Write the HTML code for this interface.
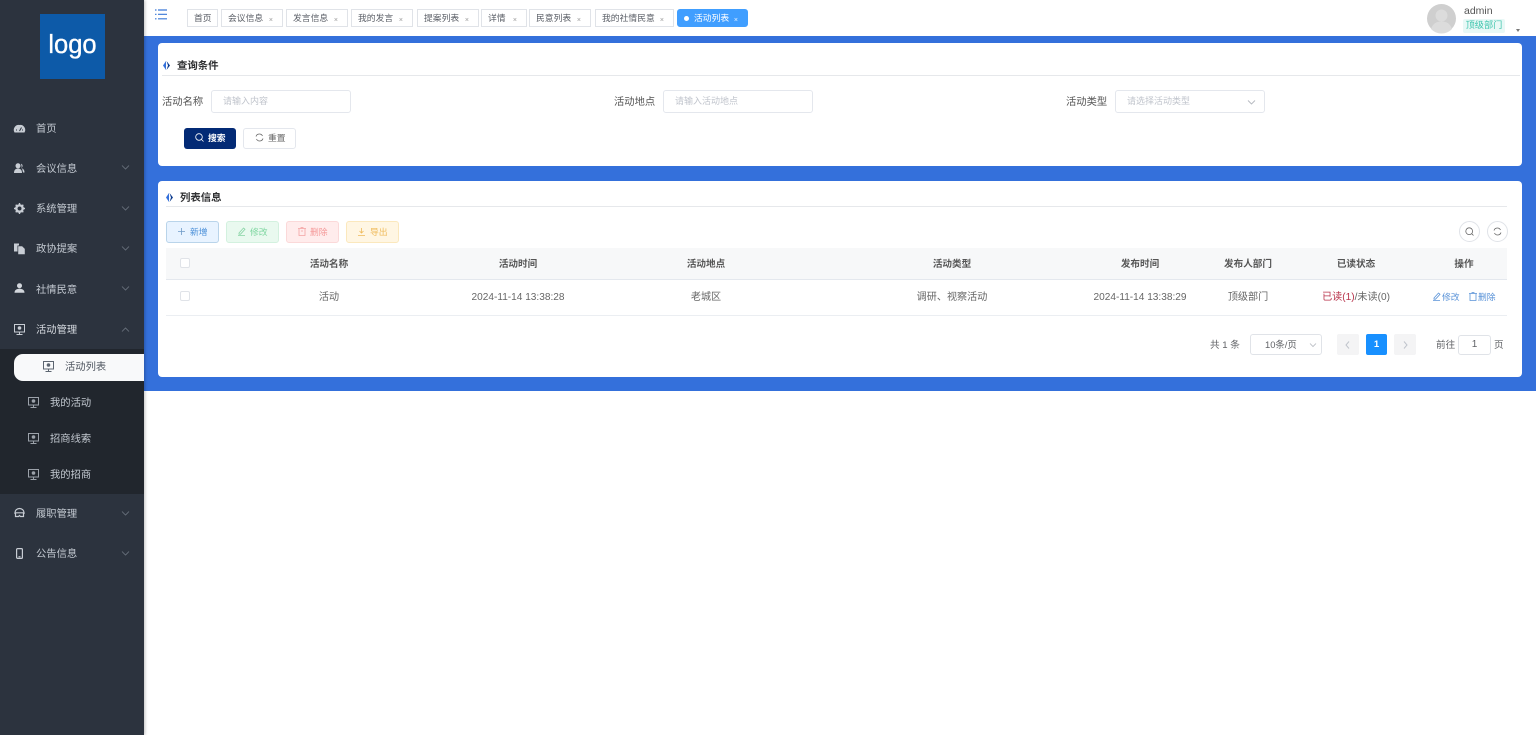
<!DOCTYPE html>
<html lang="zh-CN"><head><meta charset="utf-8"><title>活动列表</title>
<style>
*{box-sizing:border-box}
html,body{margin:0;padding:0;width:1536px;height:735px;overflow:hidden;background:#fff;font-family:"Liberation Sans","Noto Sans CJK SC",sans-serif;color:#606266}
#wrap{position:absolute;left:0;top:0;width:1536px;height:735px;overflow:hidden;filter:blur(.3px)}
.a{position:absolute;white-space:nowrap}
.c{text-align:center;transform:translateX(-50%)}
#side{left:0;top:0;width:144px;height:735px;background:#2c333e;box-shadow:1px 0 3px rgba(0,0,0,.25)}
.m{position:absolute;left:36px;font-size:10.3px;line-height:14px;color:#c3c9d1;white-space:nowrap}
.s{position:absolute;left:50px;font-size:10.3px;line-height:14px;color:#c3c9d1;white-space:nowrap}
svg{position:absolute;overflow:visible}
.tab{position:absolute;top:9px;height:18px;border:1px solid #e0e3e8;background:#fff;font-size:8.8px;line-height:17px;padding-left:6px;color:#5a5e66;white-space:nowrap}
.tab i{position:absolute;right:9px;top:2px;font-style:normal;font-size:7px;color:#999}
.card{position:absolute;background:#fff;border-radius:4px;left:158px;width:1364px}
.ttl{position:absolute;font-size:10.4px;font-weight:700;color:#303133;line-height:14px;white-space:nowrap}
.lab{position:absolute;top:96px;font-size:10.3px;line-height:14px;color:#555;white-space:nowrap}
.inp{position:absolute;top:90px;height:23px;border:1px solid #e4e7ed;border-radius:3px;background:#fff;font-size:9px;line-height:21px;color:#c0c4cc;padding-left:11px;white-space:nowrap}
.btn{position:absolute;top:221px;width:53px;height:22px;border-radius:3px;font-size:8.8px;line-height:20px;white-space:nowrap}
.btn b{position:absolute;left:23px;top:0;font-weight:400}
.th{font-size:9.6px;font-weight:700;color:#555;line-height:13px}
.td{font-size:10.1px;color:#666;line-height:14px}
.cb{position:absolute;left:180px;width:10px;height:10px;border:1px solid #e0e3e8;border-radius:2px;background:#fff}
</style></head><body><div id="wrap">

<div class="a" style="left:144px;top:36px;width:1392px;height:355px;background:#3470db"></div>

<div id="side" class="a">
<div class="a" style="left:40px;top:14px;width:65px;height:65px;background:#0d5aa8;color:#fff;font-size:25.5px;line-height:63px;text-align:center;-webkit-text-stroke:.35px #fff">logo</div>
<div class="a" style="left:0;top:349px;width:144px;height:145px;background:#21262d"></div>

<div class="m" style="top:123px">首页</div>
<div class="m" style="top:163px">会议信息</div>
<div class="m" style="top:203px">系统管理</div>
<div class="m" style="top:243px">政协提案</div>
<div class="m" style="top:284px">社情民意</div>
<div class="m" style="top:324px;color:#d5d9df">活动管理</div>
<div class="m" style="top:508px">履职管理</div>
<div class="m" style="top:548px">公告信息</div>

<svg style="left:14px;top:124px" width="11" height="9" viewBox="0 0 11 9"><path d="M.5 8.500A5 5 0 0 1 5.500 1a5 5 0 0 1 5 7.500z" fill="#c8cdd4"/><path d="M5.500 7L7.500 3.500M2 6h1M8 6h1" stroke="#2c333e" stroke-width="1"/></svg>
<svg style="left:14px;top:163px" width="11" height="10" viewBox="0 0 11 10"><circle cx="4" cy="2.800" r="2.500" fill="#c8cdd4"/><path d="M0 10C0 6.500 2 5.500 4 5.500S8 6.500 8 10z" fill="#c8cdd4"/><path d="M7 .8a2.200 2.200 0 0 1 0 4.200c2 .5 3.500 1.500 3.500 4.500H9" fill="#c8cdd4"/></svg>
<svg style="left:14px;top:203px" width="11" height="11" viewBox="0 0 11 11"><circle cx="5.500" cy="5.500" r="3.200" fill="none" stroke="#c8cdd4" stroke-width="2.400"/><path d="M5.500 0v1.500M5.500 9.500V11M0 5.500h1.500M9.500 5.500H11M1.700 1.700l1 1M8.300 8.300l1 1M1.700 9.300l1-1M8.300 2.700l1-1" stroke="#c8cdd4" stroke-width="1.400"/></svg>
<svg style="left:14px;top:243px" width="11" height="11" viewBox="0 0 11 11"><path d="M0 .5h5v2H3.500v6H0z" fill="#c8cdd4"/><path d="M4.500 3.500h3.500l2.500 2.500v5h-6z" fill="#c8cdd4" stroke="#c8cdd4" stroke-width=".6"/></svg>
<svg style="left:14px;top:283px" width="11" height="10" viewBox="0 0 11 10"><circle cx="5.500" cy="2.700" r="2.500" fill="#d2d6dc"/><path d="M.5 9.800C.5 6.800 3 5.800 5.500 5.800S10.500 6.800 10.500 9.800z" fill="#d2d6dc"/></svg>
<svg style="left:14px;top:324px" width="11" height="11" viewBox="0 0 11 11" fill="none" stroke="#c8cdd4"><rect x=".5" y=".5" width="10" height="7.500"/><path d="M5.500 8v2.500M2.500 10.500h6"/><circle cx="5.500" cy="4" r="1.300" fill="#c8cdd4"/></svg>
<svg style="left:14px;top:508px" width="11" height="10" viewBox="0 0 11 10" fill="none" stroke="#c8cdd4" stroke-width="1.200"><path d="M1 6V4.500A4.500 4 0 0 1 10 4.500V6"/><path d="M.5 4.800h10M1.500 5v3.500h3l1-1 1 1h3V5"/></svg>
<svg style="left:16px;top:548px" width="7" height="11" viewBox="0 0 7 11" fill="none" stroke="#c8cdd4" stroke-width="1.200"><rect x=".6" y=".6" width="5.800" height="9.800" rx="1"/><path d="M2.500 8.800h2"/></svg>

<svg style="left:121px;top:165px" width="9" height="5" viewBox="0 0 9 5" fill="none" stroke="#6d7580" stroke-width=".8"><path d="M1 .5l3.500 3.500L8 .5"/></svg>
<svg style="left:121px;top:206px" width="9" height="5" viewBox="0 0 9 5" fill="none" stroke="#6d7580" stroke-width=".8"><path d="M1 .5l3.500 3.500L8 .5"/></svg>
<svg style="left:121px;top:246px" width="9" height="5" viewBox="0 0 9 5" fill="none" stroke="#6d7580" stroke-width=".8"><path d="M1 .5l3.500 3.500L8 .5"/></svg>
<svg style="left:121px;top:286px" width="9" height="5" viewBox="0 0 9 5" fill="none" stroke="#6d7580" stroke-width=".8"><path d="M1 .5l3.500 3.500L8 .5"/></svg>
<svg style="left:121px;top:327px" width="9" height="5" viewBox="0 0 9 5" fill="none" stroke="#6d7580" stroke-width=".8"><path d="M1 4.500L4.500 1 8 4.500"/></svg>
<svg style="left:121px;top:511px" width="9" height="5" viewBox="0 0 9 5" fill="none" stroke="#6d7580" stroke-width=".8"><path d="M1 .5l3.500 3.500L8 .5"/></svg>
<svg style="left:121px;top:551px" width="9" height="5" viewBox="0 0 9 5" fill="none" stroke="#6d7580" stroke-width=".8"><path d="M1 .5l3.500 3.500L8 .5"/></svg>

<div class="a" style="left:14px;top:354px;width:130px;height:27px;background:#f8f9fa;border-radius:9px 0 0 9px"></div>
<div class="s" style="left:65px;top:361px;color:#4f5660">活动列表</div>
<svg style="left:43px;top:361px" width="11" height="11" viewBox="0 0 11 11" fill="none" stroke="#5c6570"><rect x=".5" y=".5" width="10" height="7.500"/><path d="M5.500 8v2.500M2.500 10.500h6"/><circle cx="5.500" cy="4" r="1.300" fill="#5c6570"/></svg>
<div class="s" style="top:397px">我的活动</div>
<div class="s" style="top:433px">招商线索</div>
<div class="s" style="top:469px">我的招商</div>
<svg style="left:28px;top:397px" width="11" height="11" viewBox="0 0 11 11" fill="none" stroke="#9ca2aa"><rect x=".5" y=".5" width="10" height="7.500"/><path d="M5.500 8v2.500M2.500 10.500h6"/><circle cx="5.500" cy="4" r="1.300" fill="#9ca2aa"/></svg>
<svg style="left:28px;top:433px" width="11" height="11" viewBox="0 0 11 11" fill="none" stroke="#9ca2aa"><rect x=".5" y=".5" width="10" height="7.500"/><path d="M5.500 8v2.500M2.500 10.500h6"/><circle cx="5.500" cy="4" r="1.300" fill="#9ca2aa"/></svg>
<svg style="left:28px;top:469px" width="11" height="11" viewBox="0 0 11 11" fill="none" stroke="#9ca2aa"><rect x=".5" y=".5" width="10" height="7.500"/><path d="M5.500 8v2.500M2.500 10.500h6"/><circle cx="5.500" cy="4" r="1.300" fill="#9ca2aa"/></svg>
</div>

<svg style="left:155px;top:9px" width="12" height="11" viewBox="0 0 12 11" fill="none" stroke="#3a78d6" stroke-width="1.200"><path d="M3 1h9M3 5.300h9M3 9.800h9M0 1h1.500M0 5.300h1.500M0 9.800h1.500"/></svg>

<div class="tab" style="left:187px;width:31px">首页</div>
<div class="tab" style="left:221px;width:62px">会议信息<i>×</i></div>
<div class="tab" style="left:286px;width:62px">发言信息<i>×</i></div>
<div class="tab" style="left:351px;width:62px">我的发言<i>×</i></div>
<div class="tab" style="left:417px;width:62px">提案列表<i>×</i></div>
<div class="tab" style="left:481px;width:46px">详情<i>×</i></div>
<div class="tab" style="left:529px;width:62px">民意列表<i>×</i></div>
<div class="tab" style="left:595px;width:79px">我的社情民意<i>×</i></div>
<div class="tab" style="left:677px;width:71px;background:#409eff;border-color:#409eff;color:#fff;border-radius:3px;padding-left:16px">活动列表<i style="color:#e8f3ff">×</i></div>
<div class="a" style="left:684px;top:16px;width:5px;height:5px;border-radius:50%;background:#fff"></div>

<svg style="left:1427px;top:4px" width="29" height="29" viewBox="0 0 29 29"><circle cx="14.500" cy="14.500" r="14.500" fill="#cfcfcf"/><circle cx="14.500" cy="11.500" r="6" fill="#dcdcdc"/><path d="M4 25c2-6 6-7.500 10.500-7.500S23 19 25 25a14.500 14.500 0 0 1-21 0z" fill="#dcdcdc"/></svg>
<div class="a" style="left:1464px;top:4px;font-size:10.5px;line-height:14px;color:#555">admin</div>
<div class="a" style="left:1463px;top:19px;width:42px;height:14px;background:#e8f8f6;border-radius:2px;font-size:9.2px;line-height:13px;text-align:center;color:#3fc5ad">顶级部门</div>
<div class="a" style="left:1516px;top:29px;width:0;height:0;border:2.500px solid transparent;border-top:3px solid #777"></div>

<div class="card" style="top:43px;height:123px"></div>
<svg style="left:163px;top:61px" width="7" height="9" viewBox="0 0 7 9"><path d="M3 0L0 4.500 3 9z" fill="#3470db"/><path d="M3.500 0L7 4.500 3.500 9 5 4.500z" fill="#0c3b8e"/></svg>
<div class="ttl" style="left:177px;top:60px">查询条件</div>
<div class="a" style="left:162px;top:75px;width:1358px;height:1px;background:#e6e8eb"></div>

<div class="lab" style="left:162px">活动名称</div>
<div class="inp" style="left:211px;width:140px">请输入内容</div>
<div class="lab" style="left:614px">活动地点</div>
<div class="inp" style="left:663px;width:150px">请输入活动地点</div>
<div class="lab" style="left:1066px">活动类型</div>
<div class="inp" style="left:1115px;width:150px">请选择活动类型</div>
<svg style="left:1247px;top:100px" width="9" height="5" viewBox="0 0 9 5" fill="none" stroke="#b4b8bf" stroke-width=".9"><path d="M1 .5l3.500 3.500L8 .5"/></svg>

<div class="a" style="left:184px;top:128px;width:52px;height:21px;background:#032a75;border-radius:3px;color:#fff;font-size:8.8px;line-height:20px;padding-left:24px;font-weight:700">搜索</div>
<svg style="left:195px;top:133px" width="9" height="9" viewBox="0 0 9 9" fill="none" stroke="#fff" stroke-width=".8"><circle cx="4" cy="4" r="3.300"/><path d="M6.500 6.500L8.500 8.500"/></svg>
<div class="a" style="left:243px;top:128px;width:53px;height:21px;background:#fff;border:1px solid #e4e7ed;border-radius:3px;color:#666;font-size:8.8px;line-height:19px;padding-left:24px">重置</div>
<svg style="left:255px;top:133px" width="9" height="9" viewBox="0 0 9 9" fill="none" stroke="#666" stroke-width=".8"><path d="M1 3.500A3.500 3.500 0 0 1 7.500 3M8 5.500A3.500 3.500 0 0 1 1.500 6"/></svg>

<div class="card" style="top:181px;height:196px"></div>
<svg style="left:166px;top:193px" width="7" height="9" viewBox="0 0 7 9"><path d="M3 0L0 4.500 3 9z" fill="#3470db"/><path d="M3.500 0L7 4.500 3.500 9 5 4.500z" fill="#0c3b8e"/></svg>
<div class="ttl" style="left:180px;top:192px">列表信息</div>
<div class="a" style="left:166px;top:206px;width:1341px;height:1px;background:#e6e8eb"></div>

<div class="btn" style="left:166px;background:#e8f3ff;border:1px solid #b9d4ea;color:#4a8fd8"><b>新增</b></div>
<svg style="left:178px;top:228px" width="7" height="7" viewBox="0 0 7 7" stroke="#6f9bc8" stroke-width=".8"><path d="M3.500 0v7M0 3.500h7"/></svg>
<div class="btn" style="left:226px;background:#e9f9ef;border:1px solid #d3f1df;color:#7ed6a0"><b>修改</b></div>
<svg style="left:238px;top:227px" width="8" height="9" viewBox="0 0 8 9" fill="none" stroke="#86d3a4" stroke-width=".8"><path d="M1 6L5.500 1l1.500 1.300L2.500 7.200H1zM0 8.500h7"/></svg>
<div class="btn" style="left:286px;background:#ffecec;border:1px solid #fbd9d9;color:#f59a9a"><b>删除</b></div>
<svg style="left:298px;top:227px" width="8" height="9" viewBox="0 0 8 9" fill="none" stroke="#f4a3a3" stroke-width=".8"><path d="M0 1.500h8M3 1.500V.5h2v1M1 1.500v7h6v-7M3 4h2"/></svg>
<div class="btn" style="left:346px;background:#fff6e3;border:1px solid #fbe8bd;color:#efbb5b"><b>导出</b></div>
<svg style="left:358px;top:228px" width="7" height="8" viewBox="0 0 7 8" fill="none" stroke="#eeb95a" stroke-width=".8"><path d="M3.500 0v4.500M1.500 3l2 2 2-2M0 7.500h7"/></svg>

<div class="a" style="left:1459px;top:221px;width:21px;height:21px;border:1px solid #e0e3e8;border-radius:50%"></div>
<svg style="left:1465px;top:227px" width="9" height="9" viewBox="0 0 9 9" fill="none" stroke="#666" stroke-width=".8"><circle cx="4.200" cy="4.200" r="3.400"/><path d="M6.700 6.700L8.500 8.500"/></svg>
<div class="a" style="left:1487px;top:221px;width:21px;height:21px;border:1px solid #e0e3e8;border-radius:50%"></div>
<svg style="left:1493px;top:227px" width="9" height="9" viewBox="0 0 9 9" fill="none" stroke="#666" stroke-width=".8"><path d="M1 3.500A3.500 3.500 0 0 1 7.500 3M8 5.500A3.500 3.500 0 0 1 1.500 6"/></svg>

<div class="a" style="left:166px;top:248px;width:1341px;height:31px;background:#f7f8f9"></div>
<div class="a" style="left:166px;top:279px;width:1341px;height:1px;background:#e4e8ee"></div>
<div class="a" style="left:166px;top:315px;width:1341px;height:1px;background:#ebeef2"></div>
<div class="cb" style="top:258px"></div>
<div class="cb" style="top:291px"></div>

<div class="a c th" style="left:329px;top:258px">活动名称</div>
<div class="a c th" style="left:518px;top:258px">活动时间</div>
<div class="a c th" style="left:706px;top:258px">活动地点</div>
<div class="a c th" style="left:952px;top:258px">活动类型</div>
<div class="a c th" style="left:1140px;top:258px">发布时间</div>
<div class="a c th" style="left:1248px;top:258px">发布人部门</div>
<div class="a c th" style="left:1356px;top:258px">已读状态</div>
<div class="a c th" style="left:1464px;top:258px">操作</div>

<div class="a c td" style="left:329px;top:291px">活动</div>
<div class="a c td" style="left:518px;top:291px">2024-11-14 13:38:28</div>
<div class="a c td" style="left:706px;top:291px">老城区</div>
<div class="a c td" style="left:952px;top:291px">调研、视察活动</div>
<div class="a c td" style="left:1140px;top:291px">2024-11-14 13:38:29</div>
<div class="a c td" style="left:1248px;top:291px">顶级部门</div>
<div class="a c td" style="left:1356px;top:291px"><span style="color:#b8324a">已读(1)</span>/未读(0)</div>
<div class="a" style="left:1442px;top:291px;font-size:8.8px;line-height:12px;color:#5a93d8">修改</div>
<svg style="left:1433px;top:292px" width="8" height="9" viewBox="0 0 8 9" fill="none" stroke="#5a93d8" stroke-width=".8"><path d="M1 6L5.500 1l1.500 1.300L2.500 7.200H1zM0 8.500h7"/></svg>
<div class="a" style="left:1478px;top:291px;font-size:8.8px;line-height:12px;color:#5a93d8">删除</div>
<svg style="left:1469px;top:292px" width="8" height="9" viewBox="0 0 8 9" fill="none" stroke="#5a93d8" stroke-width=".8"><path d="M0 1.500h8M3 1.500V.5h2v1M1 1.500v7h6v-7"/></svg>

<div class="a" style="left:1210px;top:339px;font-size:9.6px;line-height:13px;color:#606266">共 1 条</div>
<div class="a" style="left:1250px;top:334px;width:72px;height:21px;border:1px solid #e0e3e8;border-radius:3px;font-size:9.4px;line-height:20px;padding-left:14px;color:#606266">10条/页</div>
<svg style="left:1309px;top:343px" width="8" height="5" viewBox="0 0 8 5" fill="none" stroke="#b4b8bf" stroke-width=".8"><path d="M1 .5l3 3 3-3"/></svg>
<div class="a" style="left:1337px;top:334px;width:22px;height:21px;background:#f4f4f5;border-radius:2px"></div>
<svg style="left:1345px;top:341px" width="5" height="8" viewBox="0 0 5 8" fill="none" stroke="#c0c4cc"><path d="M4 .5L1 4l3 3.500"/></svg>
<div class="a" style="left:1366px;top:334px;width:21px;height:21px;background:#1890ff;border-radius:2px;color:#fff;font-size:9.5px;font-weight:700;line-height:21px;text-align:center">1</div>
<div class="a" style="left:1394px;top:334px;width:22px;height:21px;background:#f4f4f5;border-radius:2px"></div>
<svg style="left:1403px;top:341px" width="5" height="8" viewBox="0 0 5 8" fill="none" stroke="#c0c4cc"><path d="M1 .5L4 4 1 7.500"/></svg>
<div class="a" style="left:1436px;top:339px;font-size:9.6px;line-height:13px;color:#606266">前往</div>
<div class="a" style="left:1458px;top:335px;width:33px;height:20px;border:1px solid #e0e3e8;border-radius:3px;font-size:10px;line-height:18px;text-align:center;color:#606266">1</div>
<div class="a" style="left:1494px;top:339px;font-size:9.6px;line-height:13px;color:#606266">页</div>

</div></body></html>
